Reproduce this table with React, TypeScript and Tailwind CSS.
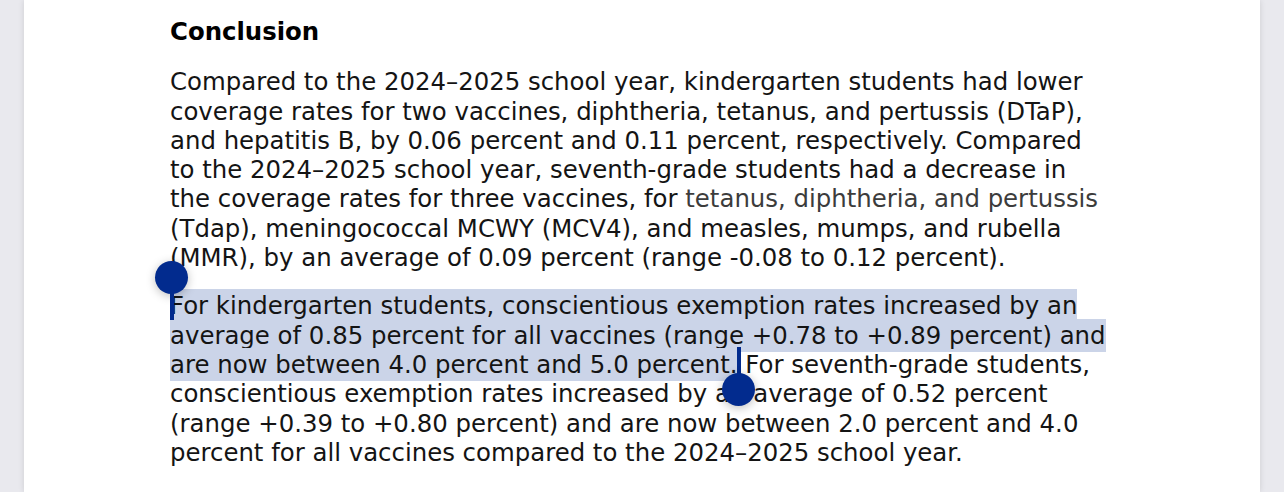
import React from 'react'

const sel = 'bg-[#cbd4e8] py-[2px] [box-decoration-break:clone]'

function Handle({ pos }: { pos: 'start' | 'end' }) {
  if (pos === 'start') {
    return (
      <div className="absolute left-[155px] top-[261px] flex flex-col items-center">
        <div className="h-[33px] w-[33px] rounded-full bg-[#022b8e] shadow-[0_2px_10px_rgba(0,0,0,0.25)]" />
        <div className="-mt-[2px] h-[28px] w-[4px] bg-[#022b8e]" />
      </div>
    )
  }
  return (
    <div className="absolute left-[722px] top-[347px] flex flex-col items-center">
      <div className="h-[28px] w-[4px] bg-[#022b8e]" />
      <div className="-mt-[2px] h-[33px] w-[33px] rounded-full bg-[#022b8e] shadow-[0_2px_10px_rgba(0,0,0,0.25)]" />
    </div>
  )
}

export default function App() {
  return (
    <div className="relative flex h-[492px] w-[1284px] overflow-hidden bg-[#e9e9ee] font-['DejaVu_Sans',sans-serif]">
      <div className="ml-[24px] mr-[24px] flex-1 bg-white pl-[146px] pt-[17px] text-[24.4px] leading-[29.3px] text-[#141414] shadow-[0_0_6px_rgba(0,0,0,0.12)]">
        <h2 className="font-bold text-black">Conclusion</h2>

        <p className="mt-[21px] whitespace-nowrap">
          Compared to the 2024–2025 school year, kindergarten students had lower<br />
          coverage rates for two vaccines, diphtheria, tetanus, and pertussis (DTaP),<br />
          and hepatitis B, by 0.06 percent and 0.11 percent, respectively. Compared<br />
          to the 2024–2025 school year, seventh-grade students had a decrease in<br />
          the coverage rates for three vaccines, for <span className="text-[#3c3c3c]">tetanus, diphtheria, and pertussis</span><br />
          (Tdap), meningococcal MCWY (MCV4), and measles, mumps, and rubella<br />
          (MMR), by an average of 0.09 percent (range -0.08 to 0.12 percent).
        </p>

        <p className="mt-[19px] whitespace-nowrap">
          <span className={sel}>For kindergarten students, conscientious exemption rates increased by an</span><br />
          <span className={sel}>average of 0.85 percent for all vaccines (range +0.78 to +0.89 percent) and</span><br />
          <span className={sel}>are now between 4.0 percent and 5.0 percent.</span> For seventh-grade students,<br />
          conscientious exemption rates increased by an average of 0.52 percent<br />
          (range +0.39 to +0.80 percent) and are now between 2.0 percent and 4.0<br />
          percent for all vaccines compared to the 2024–2025 school year.
        </p>
      </div>

      <Handle pos="start" />
      <Handle pos="end" />
    </div>
  )
}
